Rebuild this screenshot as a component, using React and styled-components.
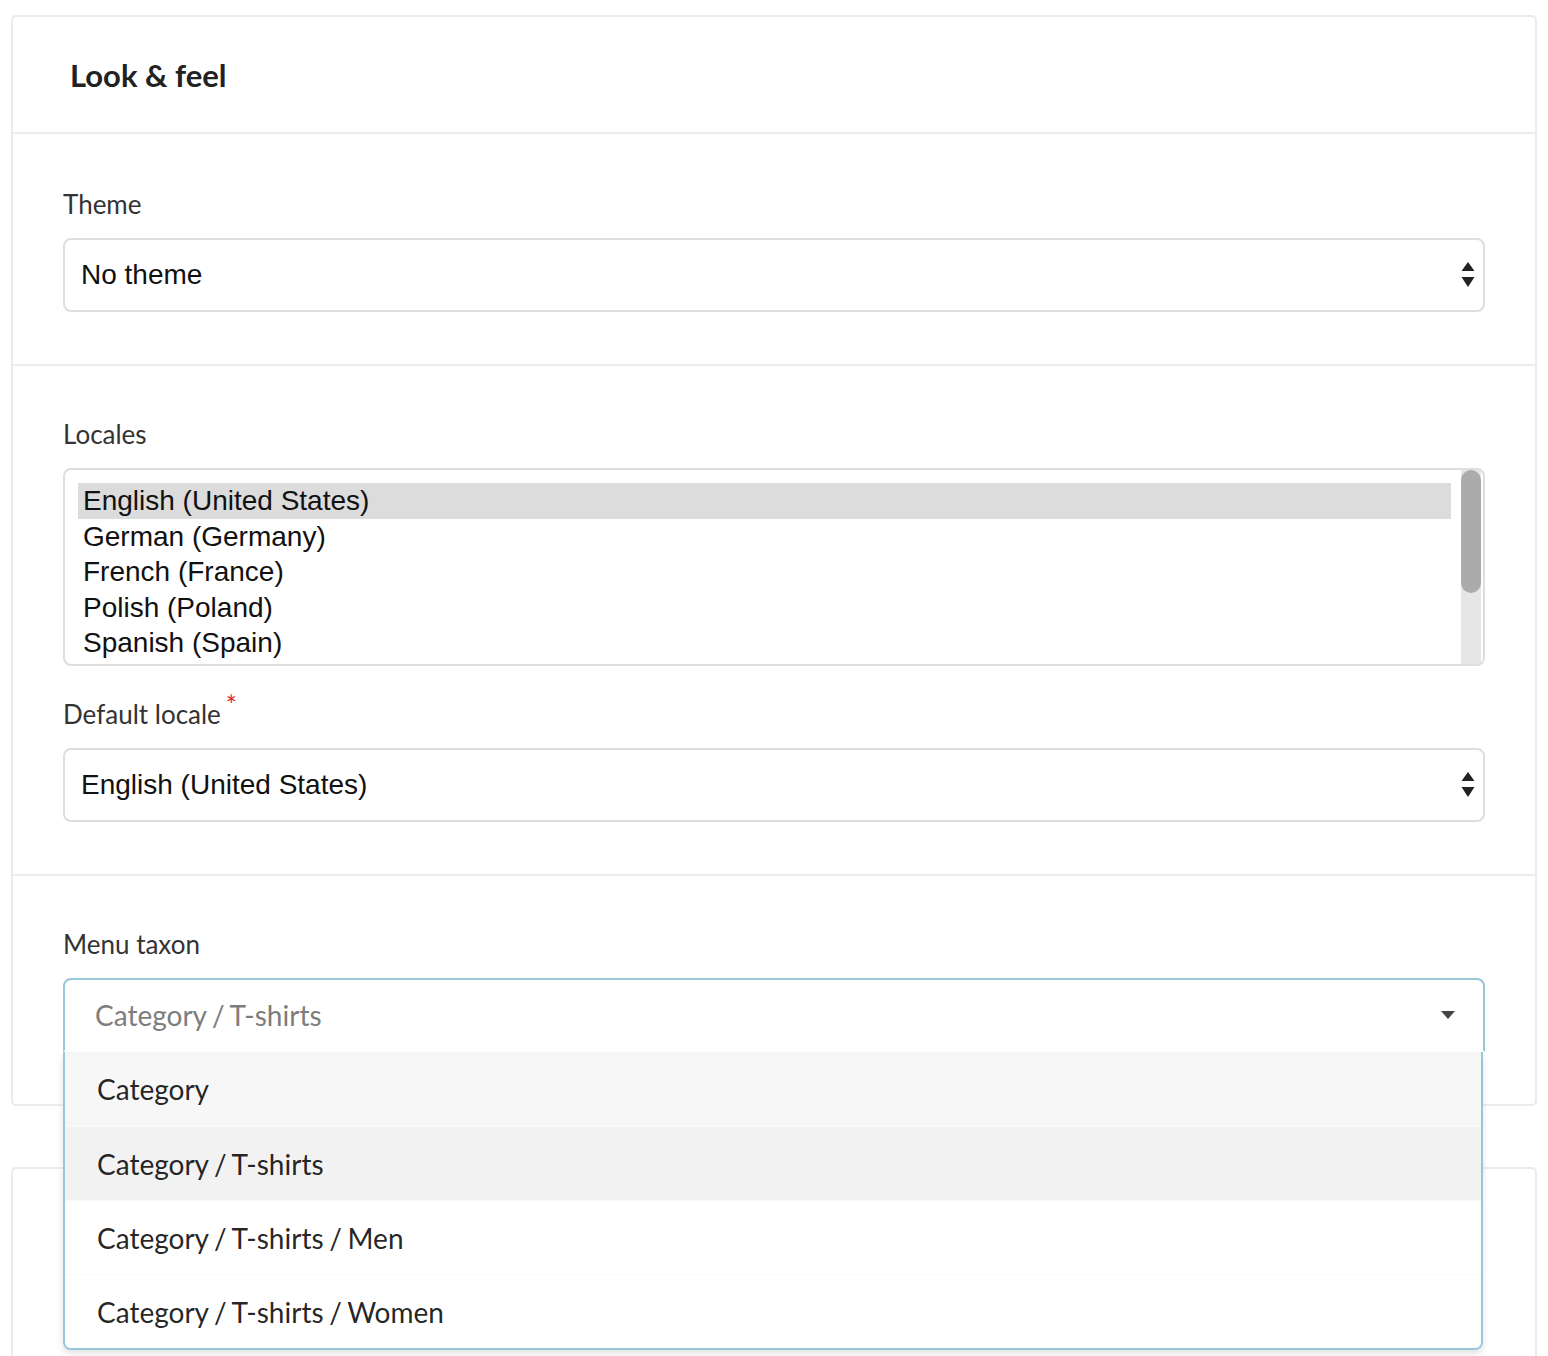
import React from 'react';
import styled, { createGlobalStyle } from 'styled-components';

const GlobalStyle = createGlobalStyle`
  html, body {
    margin: 0;
    padding: 0;
    background: #ffffff;
    overflow: hidden;
  }
  body {
    font-family: Lato, "Open Sans", sans-serif;
    color: #333333;
  }
`;

const Page = styled.div`
  padding: 15px 11px 0 11px;
  display: flex;
  flex-direction: column;
  gap: 61px;
`;

const Card = styled.div`
  border: 2px solid #ebebeb;
  border-radius: 5px;
  background: #ffffff;
  min-height: ${(p) => p.minHeight || 'auto'};
`;

const CardHeader = styled.div`
  height: 115px;
  display: flex;
  align-items: center;
  padding: 0 57px;
  border-bottom: 2px solid #ebebeb;
`;

const Title = styled.h3`
  margin: 0;
  font-family: Lato, sans-serif;
  font-weight: 700;
  font-size: 31px;
  color: #222222;
`;

const Section = styled.div`
  padding: ${(p) => (p.first ? '50px' : '48px')} 50px 52px 50px;
  border-top: ${(p) => (p.first ? 'none' : '2px solid #ebebeb')};
  display: flex;
  flex-direction: column;
`;

const Label = styled.label`
  font-family: Lato, sans-serif;
  font-size: 26px;
  line-height: 40px;
  color: #333333;
  margin: ${(p) => (p.spaced ? '28px 0 14px 0' : '0 0 14px 0')};
  display: block;
`;

const Required = styled.span`
  color: #db2828;
  font-size: 26px;
  line-height: 0;
  position: relative;
  top: -9px;
  margin-left: 5px;
`;

const NativeSelect = styled.div`
  height: 74px;
  box-sizing: border-box;
  border: 2px solid #dedede;
  border-radius: 8px;
  display: flex;
  align-items: center;
  justify-content: space-between;
  padding: 0 8px 0 16px;
  font-family: "Liberation Sans", Arial, sans-serif;
  font-size: 28px;
  color: #111111;
`;

const ListBox = styled.div`
  height: 198px;
  box-sizing: border-box;
  border: 2px solid #dedede;
  border-radius: 8px;
  display: flex;
  overflow: hidden;
`;

const Options = styled.div`
  flex: 1;
  padding: 13px 10px 0 13px;
`;

const Option = styled.div`
  height: 35.5px;
  line-height: 35.5px;
  padding-left: 5px;
  font-family: "Liberation Sans", Arial, sans-serif;
  font-size: 28px;
  color: #111111;
  background: ${(p) => (p.selected ? '#dcdcdc' : 'transparent')};
`;

const ScrollTrack = styled.div`
  width: 20px;
  margin-right: 2px;
  background: #e6e6e6;
  display: flex;
  flex-direction: column;
`;

const ScrollThumb = styled.div`
  height: 123px;
  background: #ababab;
  border-radius: 10px;
`;

const DropdownWrap = styled.div`
  position: relative;
`;

const DropdownControl = styled.div`
  height: 74px;
  box-sizing: border-box;
  border: 2px solid #96c8da;
  border-bottom-color: transparent;
  border-radius: 8px 8px 0 0;
  display: flex;
  align-items: center;
  justify-content: space-between;
  padding: 0 28px 0 30px;
  font-family: Lato, sans-serif;
  font-size: 28px;
  word-spacing: -1.5px;
  color: #7d7d7d;
`;

const Menu = styled.div`
  position: absolute;
  top: 100%;
  left: 0;
  right: 2px;
  background: #ffffff;
  border: 2px solid #96c8da;
  border-top: none;
  border-radius: 0 0 8px 8px;
  box-shadow: 0 4px 6px rgba(34, 36, 38, 0.12);
  overflow: hidden;
`;

const MenuItem = styled.div`
  height: 74px;
  box-sizing: border-box;
  display: flex;
  align-items: center;
  padding: 0 32px;
  border-top: ${(p) => (p.first ? 'none' : '1px solid #fafafa')};
  background: ${(p) => p.bg || '#ffffff'};
  font-family: Lato, sans-serif;
  font-size: 28px;
  word-spacing: -1.5px;
  color: rgba(0, 0, 0, 0.87);
`;

const UpDown = () => (
  <svg width="14" height="26" viewBox="0 0 14 26">
    <polygon points="7,0 13.5,9 0.5,9" fill="#222" />
    <polygon points="0.5,15 13.5,15 7,25" fill="#222" />
  </svg>
);

const Caret = () => (
  <svg width="14" height="8" viewBox="0 0 14 8">
    <polygon points="0,0 14,0 7,8" fill="#444" />
  </svg>
);

const locales = [
  'English (United States)',
  'German (Germany)',
  'French (France)',
  'Polish (Poland)',
  'Spanish (Spain)',
];

const taxons = [
  { label: 'Category', bg: '#f7f7f7' },
  { label: 'Category / T-shirts', bg: '#f2f2f2' },
  { label: 'Category / T-shirts / Men' },
  { label: 'Category / T-shirts / Women' },
];

const App = () => {
  return (
    <>
      <GlobalStyle />
      <Page>
        <Card>
          <CardHeader>
            <Title>Look &amp; feel</Title>
          </CardHeader>

          <Section first>
            <Label>Theme</Label>
            <NativeSelect>
              <span>No theme</span>
              <UpDown />
            </NativeSelect>
          </Section>

          <Section>
            <Label>Locales</Label>
            <ListBox>
              <Options>
                {locales.map((l, i) => (
                  <Option key={l} selected={i === 0}>{l}</Option>
                ))}
              </Options>
              <ScrollTrack>
                <ScrollThumb />
              </ScrollTrack>
            </ListBox>
            <Label spaced>
              Default locale<Required>*</Required>
            </Label>
            <NativeSelect>
              <span>English (United States)</span>
              <UpDown />
            </NativeSelect>
          </Section>

          <Section>
            <Label>Menu taxon</Label>
            <DropdownWrap>
              <DropdownControl>
                <span>Category / T-shirts</span>
                <Caret />
              </DropdownControl>
              <Menu>
                {taxons.map((t, i) => (
                  <MenuItem key={t.label} first={i === 0} bg={t.bg}>{t.label}</MenuItem>
                ))}
              </Menu>
            </DropdownWrap>
          </Section>
        </Card>

        <Card minHeight="400px" />
      </Page>
    </>
  );
};

export default App;
